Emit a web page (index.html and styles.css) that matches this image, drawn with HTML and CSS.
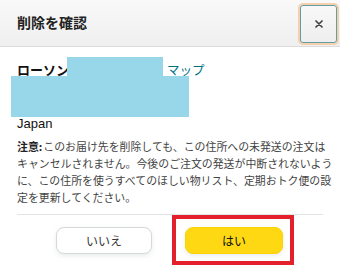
FILE: index.html
```html
<!DOCTYPE html>
<html lang="ja">
<head>
<meta charset="utf-8">
<link rel="stylesheet" href="styles.css">
</head>
<body>
<div class="dialog">
  <div class="header">
    <h1 class="title">削除を確認</h1>
    <button class="close" aria-label="閉じる">
      <svg width="8" height="8" viewBox="0 0 8 8"><path d="M1 1L7 7M7 1L1 7" stroke="#444" stroke-width="1.7" stroke-linecap="round"/></svg>
    </button>
  </div>
  <div class="body">
    <div class="address">
      <div class="line"><span class="name">ローソン</span><span class="gap"></span><a class="map" href="#">マップ</a></div>
      <div class="line"></div>
      <div class="line"></div>
      <div class="line country">Japan</div>
      <div class="redact redact-top"></div>
      <div class="redact redact-bottom"></div>
    </div>
    <p class="note"><b class="label">注意:</b>このお届け先を削除しても、この住所への未発送の注文はキャンセルされません。今後のご注文の発送が中断されないように、この住所を使うすべてのほしい物リスト、定期おトク便の設定を更新してください。</p>
    <div class="divider"></div>
    <div class="actions">
      <button class="btn btn-no">いいえ</button>
      <button class="btn btn-yes">はい</button>
      <div class="highlight"></div>
    </div>
  </div>
</div>
</body>
</html>
```

FILE: styles.css
```css
html, body {
  margin: 0;
  padding: 0;
  background: #ffffff;
}
body {
  width: 340px;
  height: 266px;
  overflow: hidden;
  font-family: "Liberation Sans", "Noto Sans CJK JP", sans-serif;
  color: #111111;
}
.header {
  height: 46px;
  border-bottom: 1px solid #dcdcdc;
  background: linear-gradient(#f9f9f9, #efefef);
  display: flex;
  align-items: center;
  justify-content: space-between;
  padding: 0 3px 0 17px;
}
.title {
  margin: 0;
  font-family: "Noto Sans CJK JP", sans-serif;
  font-size: 14px;
  font-weight: 700;
  color: #222;
  padding-bottom: 2px;
}
.close {
  width: 37px;
  height: 38px;
  margin-top: 1px;
  border: 1px solid #5f9ea4;
  border-radius: 3px;
  background: linear-gradient(#f8f8f8, #eeeeee);
  box-shadow: 0 0 0 2px #f6d0ad;
  display: flex;
  align-items: center;
  justify-content: center;
  padding: 0;
}
.body {
  padding: 14px 17px 0 17px;
}
.address {
  position: relative;
  font-size: 13px;
}
.line {
  height: 18px;
  line-height: 18px;
}
.name {
  font-family: "Noto Sans CJK JP", sans-serif;
  font-weight: 700;
  color: #111;
}
.gap {
  display: inline-block;
  width: 98px;
}
.map {
  font-family: "Noto Sans CJK JP", sans-serif;
  color: #007185;
  text-decoration: none;
  font-size: 12.5px;
}
.country {
  font-size: 13px;
  color: #111;
  font-family: "Liberation Sans", sans-serif;
}
.redact {
  position: absolute;
  background: #98d7ea;
}
.redact-top {
  left: 50px;
  top: -4px;
  width: 96px;
  height: 20px;
}
.redact-bottom {
  left: -6px;
  top: 15px;
  width: 178px;
  height: 41px;
}
.note {
  margin: 5px 0 0 0;
  width: 317.5px;
  font-family: "Noto Sans CJK JP", sans-serif;
  font-size: 10.9px;
  line-height: 17px;
  color: #444;
}
.label {
  display: inline-block;
  color: #222;
  margin-right: 1px;
}
.divider {
  margin-top: 8px;
  height: 1px;
  background: #e4e4e4;
}
.actions {
  position: relative;
  display: flex;
  justify-content: center;
  gap: 33px;
  padding-top: 12px;
  margin-left: -1px;
}
.btn {
  height: 27px;
  border-radius: 8px;
  font-family: "Noto Sans CJK JP", sans-serif;
  font-size: 12px;
  color: #0f1111;
  padding: 0;
}
.btn-no {
  width: 96px;
  background: #ffffff;
  border: 1px solid #d5d9d9;
  box-shadow: 0 2px 4px rgba(213, 217, 217, 0.5);
  color: #333;
}
.btn-yes {
  width: 98px;
  background: #ffd814;
  border: 1px solid #fcd200;
  box-shadow: 0 2px 4px rgba(213, 217, 217, 0.5);
}
.highlight {
  position: absolute;
  left: 156px;
  top: 0;
  width: 114px;
  height: 42px;
  border: 4px solid #e3202c;
}
```
